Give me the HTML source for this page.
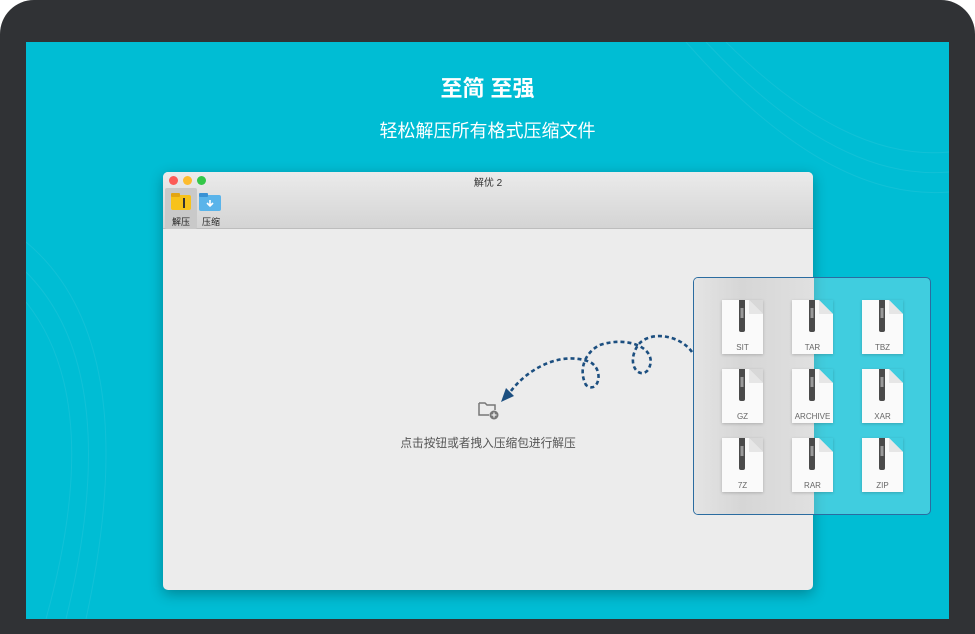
<!DOCTYPE html>
<html><head><meta charset="utf-8"><style>
*{margin:0;padding:0;box-sizing:border-box}
body{width:975px;height:634px;background:#fff;position:relative;overflow:hidden;font-family:"Liberation Sans","Noto Sans CJK SC",sans-serif}
.bezel{position:absolute;left:0;top:0;width:975px;height:634px;background:#303235;border-radius:34px 34px 0 0}
.screen{position:absolute;left:26px;top:42px;width:923px;height:577px;background:#00bdd4;overflow:hidden}
.t1{position:absolute;left:0;width:975px;top:71px;text-align:center;color:#fff;font-size:22px;font-weight:bold;letter-spacing:0px}
.t2{position:absolute;left:0;width:975px;top:117px;text-align:center;color:#fff;font-size:18px}
.win{position:absolute;left:163px;top:172px;width:650px;height:418px;background:#ececec;border-radius:5px;box-shadow:0 4px 14px rgba(0,0,0,.3);overflow:hidden}
.bar{position:absolute;left:0;top:0;width:650px;height:57px;background:linear-gradient(#ebebeb,#d4d4d4);border-bottom:1px solid #bdbdbd}
.dot{position:absolute;top:4px;width:9px;height:9px;border-radius:50%}
.title{position:absolute;top:2px;left:0;width:650px;text-align:center;font-size:10px;color:#333}
.tb{position:absolute;top:16px;height:41px;width:32px;font-size:9px;color:#222;text-align:center}
.tb span{position:absolute;left:0;width:32px;top:27px}
.box{position:absolute;left:693px;top:277px;width:238px;height:238px;border:1px solid #2b6ca0;border-radius:5px;background:rgba(255,255,255,.25);overflow:hidden}
.box .l{position:absolute;left:0;top:0;width:120px;height:238px;background:linear-gradient(90deg,#e4e4e4,#d6d6d6 40%,#e0e0e0)}
.f{position:absolute;width:41px;height:54px}
.f .lab{position:absolute;left:-10px;width:61px;top:43px;text-align:center;font-size:8px;color:#666}
</style></head><body>
<div class="bezel"></div>
<div class="screen">
<svg width="923" height="577" style="position:absolute;left:0;top:0" fill="none" stroke="rgba(255,255,255,.07)" stroke-width="1">
<path d="M700 0 Q820 120 923 110"/><path d="M680 0 Q810 140 923 130"/><path d="M660 0 Q800 160 923 150"/>
<path d="M0 200 Q120 300 60 577"/><path d="M0 230 Q100 330 40 577"/><path d="M0 260 Q80 360 20 577"/>
</svg>
</div>
<div class="t1">至简 至强</div>
<div class="t2">轻松解压所有格式压缩文件</div>
<div class="win">
<div class="bar">
<div class="dot" style="left:6px;background:#fc5b57"></div>
<div class="dot" style="left:20px;background:#fdbc2e"></div>
<div class="dot" style="left:34px;background:#33c748"></div>
<div class="title">解优 2</div>
<div class="tb" style="left:2px;background:#c9c9c9;border-radius:2px">
<svg width="32" height="24" style="position:absolute;left:0;top:2px"><rect x="6" y="5" width="20" height="15" rx="2" fill="#f7c21a"/><rect x="6" y="3" width="9" height="4" rx="1" fill="#e3a512"/><rect x="18" y="8" width="2" height="10" fill="#333"/></svg>
<span>解压</span></div>
<div class="tb" style="left:32px">
<svg width="32" height="24" style="position:absolute;left:0;top:2px"><rect x="4" y="5" width="22" height="16" rx="2" fill="#5ab4ea"/><rect x="4" y="3" width="9" height="4" rx="1" fill="#3a92d4"/><path d="M15 10v6M12 13l3 3 3-3" stroke="#fff" stroke-width="1.6" fill="none"/></svg>
<span>压缩</span></div>
</div>
<svg width="24" height="20" style="position:absolute;left:314px;top:228px" fill="none" stroke="#777" stroke-width="1.5"><path d="M2 3h6l2 2h8v5M2 3v12h10"/><circle cx="17" cy="15" r="4.5" fill="#777" stroke="none"/><path d="M17 12.5v5M14.5 15h5" stroke="#eee" stroke-width="1.3"/></svg>
<div style="position:absolute;left:0;width:650px;top:262px;text-align:center;font-size:11.7px;color:#555">点击按钮或者拽入压缩包进行解压</div>
</div>
<div class="box"><div class="l"></div></div>
<svg width="975" height="634" style="position:absolute;left:0;top:0" fill="none">
<path d="M692 352 C680 335 650 330 638 345 C625 365 640 380 648 370 C660 350 630 335 600 345 C585 352 578 370 586 385 C598 395 605 370 590 362 C560 350 525 370 508 395" stroke="#1c4f80" stroke-width="2.6" stroke-dasharray="4 3"/>
<path d="M501 402 L506 388 L514 396 Z" fill="#1c4f80"/>
</svg>
<div id="files"></div>
<script>
var n=["SIT","TAR","TBZ","GZ","ARCHIVE","XAR","7Z","RAR","ZIP"],h="";
for(var i=0;i<9;i++){var x=722+(i%3)*70,y=300+Math.floor(i/3)*69;
h+='<div class="f" style="left:'+x+'px;top:'+y+'px;box-shadow:0 1px 3px rgba(0,0,0,.2)"><svg width="41" height="54"><path d="M0 0H27L41 14V54H0Z" fill="#fafafa"/><path d="M27 0V14H41" fill="#e6e6e6"/><rect x="17" y="-2" width="6" height="34" rx="2" fill="#4a4a4a"/><rect x="18.5" y="8" width="3" height="10" fill="#9a9a9a"/></svg><div class="lab">'+n[i]+'</div></div>';}
document.getElementById("files").innerHTML=h;
</script>
</body></html>
